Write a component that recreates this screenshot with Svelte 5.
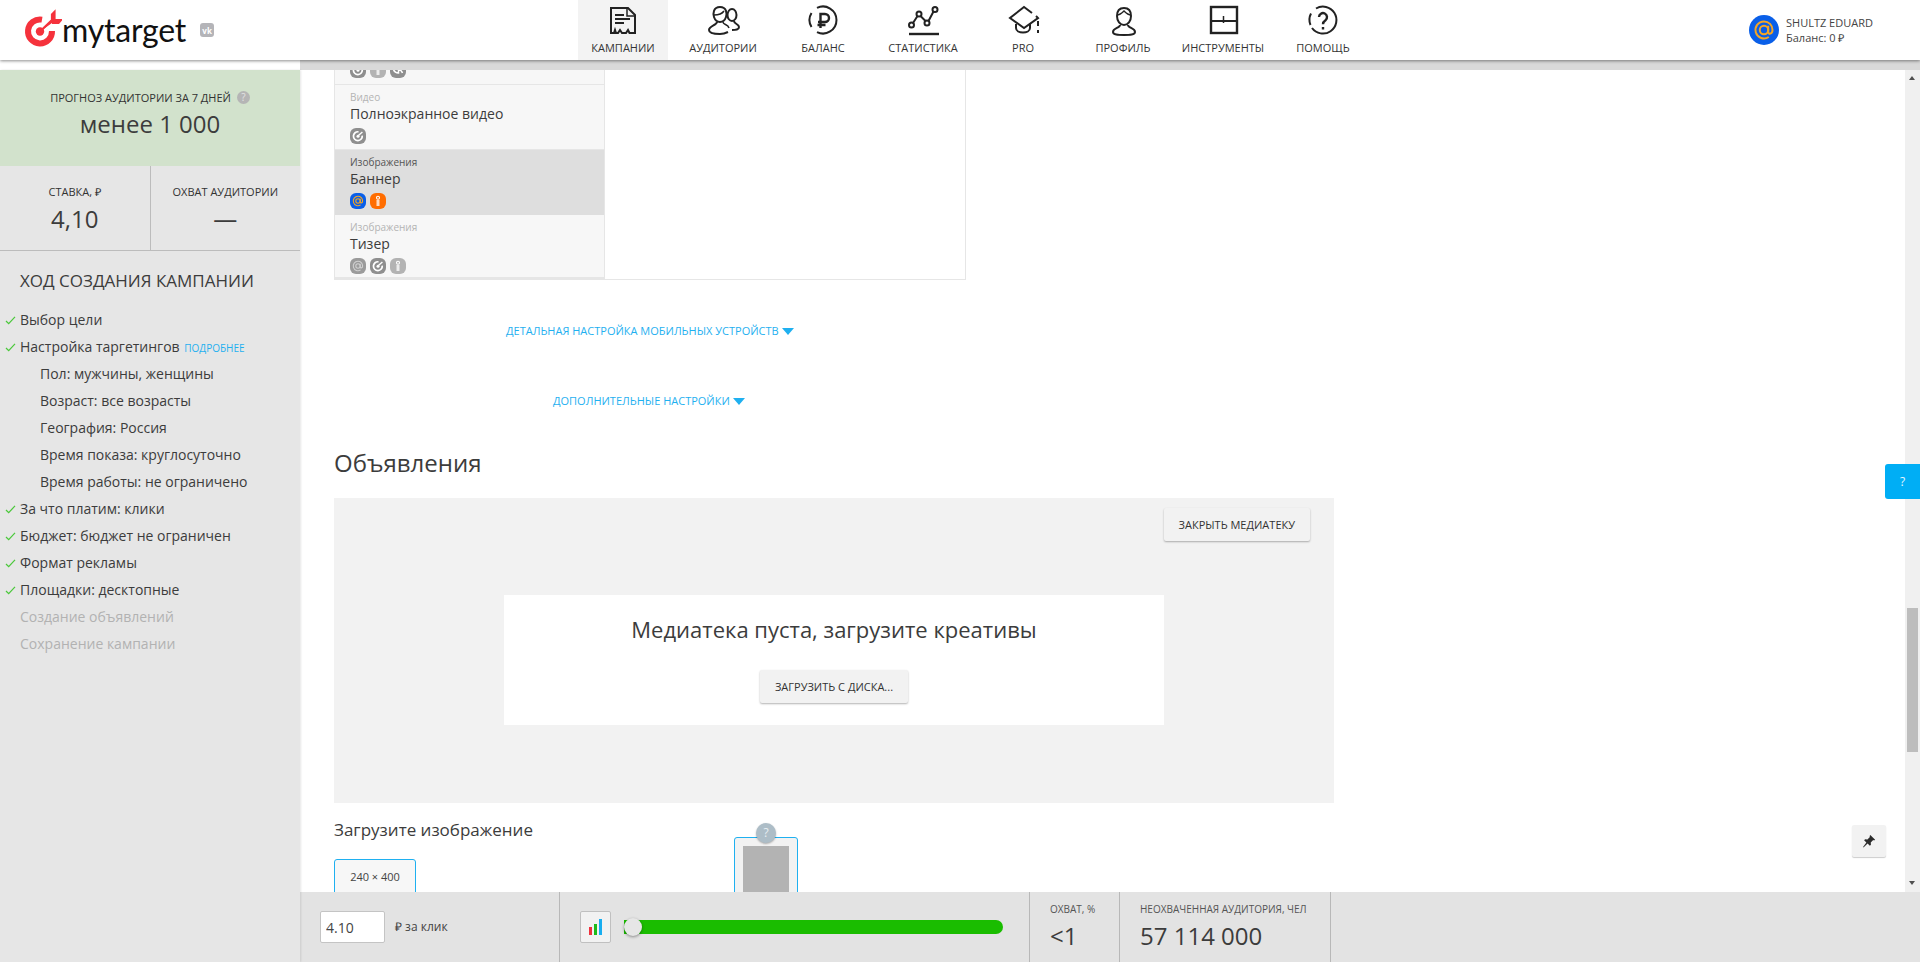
<script lang="ts">
    const nav = [
        { id: "campaigns", label: "КАМПАНИИ", active: true },
        { id: "audience", label: "АУДИТОРИИ" },
        { id: "balance", label: "БАЛАНС" },
        { id: "stats", label: "СТАТИСТИКА" },
        { id: "pro", label: "PRO" },
        { id: "profile", label: "ПРОФИЛЬ" },
        { id: "tools", label: "ИНСТРУМЕНТЫ" },
        { id: "help", label: "ПОМОЩЬ" },
    ];

    const steps = [
        { text: "Выбор цели", kind: "done" },
        { text: "Настройка таргетингов", kind: "done", more: true },
        { text: "Пол: мужчины, женщины", kind: "sub" },
        { text: "Возраст: все возрасты", kind: "sub" },
        { text: "География: Россия", kind: "sub" },
        { text: "Время показа: круглосуточно", kind: "sub" },
        { text: "Время работы: не ограничено", kind: "sub" },
        { text: "За что платим: клики", kind: "done" },
        { text: "Бюджет: бюджет не ограничен", kind: "done" },
        { text: "Формат рекламы", kind: "done" },
        { text: "Площадки: десктопные", kind: "done" },
        { text: "Создание объявлений", kind: "todo" },
        { text: "Сохранение кампании", kind: "todo" },
    ];

    const formats = [
        { type: "Видео", name: "Полноэкранное видео", icons: ["target"] },
        { type: "Изображения", name: "Баннер", icons: ["mail", "ok"], selected: true },
        { type: "Изображения", name: "Тизер", icons: ["mail", "target", "ok"] },
    ];
</script>

{#snippet platform(kind, on)}
    <span class="platform {kind} {on ? 'on' : ''}">
        <svg viewBox="0 0 16 16" width="16" height="16">
            {#if kind === "mail"}
                <circle cx="8" cy="8" r="2.2" fill="none" stroke="currentColor" stroke-width="1.1" />
                <path d="M10.2 5.8v3.1c0 1.6 2.4 1.3 2.4-1 0-2.7-2-4.6-4.6-4.6a4.700 4.700 0 1 0 2.6 8.600" fill="none" stroke="currentColor" stroke-width="1.1" />
            {:else if kind === "target"}
                <path d="M8.500 3.800a4.400 4.400 0 1 0 3.700 3.800" fill="none" stroke="#fff" stroke-width="1.700" />
                <circle cx="8" cy="8.200" r="1.500" fill="#fff" />
                <path d="M8.400 7.600 12.400 4" stroke="#fff" stroke-width="1.400" />
            {:else if kind === "vk"}
                <path d="M3 5.500c.5 3.500 2.500 5.500 5.500 5.500V5.500M8.500 8c2 0 3-1 3.500-2.500M9 8c2 0 3 1.500 3.500 3" fill="none" stroke="#fff" stroke-width="1.500" />
            {:else}
                <circle cx="8" cy="4.800" r="1.500" fill="none" stroke="#fff" stroke-width="1.100" />
                <path d="M6.500 8h3M6.500 10h3M6.500 12h3" stroke="#fff" stroke-width="1.300" />
            {/if}
        </svg>
    </span>
{/snippet}

{#snippet navIcon(id)}
    <svg viewBox="0 0 34 34" width="34" height="34" fill="none" stroke="#222" stroke-width="2">
        {#if id === "campaigns"}
            <path d="M5 4h17l7 7v18h-5.500l-1.500-3-2 3h-4l-2-3-2 3h-2l-1-3-1 3H5z" />
            <path d="M21 4v8h8" stroke-width="1.500" />
            <path d="M9 11h9M9 15h15M9 19h9" />
        {:else if id === "audience"}
            <path d="M8 13c-1-3-1-10 6-10s7 7 6 10c-1 3-3 5-6 5s-5-2-6-5z" />
            <path d="M8 11c3 0 8-1 10-4" stroke-width="1.500" />
            <path d="M11 18c0 3-8 4-8 8 0 3 5 4 11 4 4 0 6-1 8-2" />
            <path d="M17 18c0 3 5 2 6 6" stroke-width="1.500" />
            <ellipse cx="26" cy="11" rx="4.500" ry="6" />
            <path d="M28 17c0 3 5 3 5 6 0 3-3 3-7 3" />
        {:else if id === "balance"}
            <path d="M11 3.900A13.500 13.500 0 1 1 11 28.100M5.500 9a13.500 13.500 0 0 0 0 14" />
            <path d="M14.500 24V10h4.500a4 4 0 0 1 0 8h-7M11.500 21h8" stroke-width="2.400" />
        {:else if id === "stats"}
            <circle cx="5.500" cy="21" r="2.500" />
            <circle cx="13" cy="10" r="2.500" />
            <circle cx="21" cy="19" r="2.500" />
            <circle cx="29" cy="5.500" r="2.500" />
            <path d="M7 19l4.500-7M14.500 12l5 5M22.500 17l5-9.500" />
            <path d="M3 30h30" stroke-width="2.400" />
        {:else if id === "pro"}
            <path d="M26 9 18 3 4 14l14 10 14-10-2-2" />
            <path d="M10 20v4c0 6 14 6 14 0v-4" />
            <path d="M32 17v5M32 26v3" />
        {:else if id === "profile"}
            <path d="M11 12c0-5 2-8 7-8s7 3 7 8-3 9-7 9-7-4-7-9z" />
            <path d="M11 11c3 0 5-2 7-4 2 2 4 4 7 4" stroke-width="1.500" />
            <path d="M14 21c0 3-7 3-7 7 0 3 5 3 11 3s11 0 11-3c0-4-7-4-7-7" />
        {:else if id === "tools"}
            <rect x="5" y="3" width="26" height="26" stroke-width="2.400" />
            <path d="M5 17h26" />
            <path d="M17.500 12v7" stroke-width="1.500" />
        {:else}
            <path d="M10 4.500A13.500 13.500 0 1 1 6 24M5 9.500a13.500 13.500 0 0 0-.500 11.500" />
            <path d="M13 13a4 4 0 1 1 6.500 3.200c-1.500 1-2.500 2-2.500 4" stroke-width="2.400" />
            <path d="M17 23v2.500" stroke-width="2.400" />
        {/if}
    </svg>
{/snippet}

<div class="page">
    <header class="top">
        <div class="logo">
            <svg viewBox="0 0 38 44" width="38" height="44">
                <path d="M18 11.600a12 12 0 1 0 10 11.400" fill="none" stroke="#f5323c" stroke-width="6" />
                <circle cx="16" cy="23.500" r="4.200" fill="#f5323c" />
                <path d="M16 23.500 28 12V6.500l2.500-2.500v8h6.500l-2.500 3H28" fill="#f5323c" stroke="#f5323c" stroke-width="2.200" />
            </svg>
            <span class="logo-name">mytarget</span>
            <span class="logo-vk">vk</span>
        </div>
        <nav class="nav">
            {#each nav as item (item.id)}
                <div class="nav-item {item.active ? 'active' : ''}">
                    {@render navIcon(item.id)}
                    <span>{item.label}</span>
                </div>
            {/each}
        </nav>
        <div class="account">
            <span class="avatar">
                <svg viewBox="0 0 30 30" width="30" height="30">
                    <circle cx="15" cy="15" r="15" fill="#0a5fe8" />
                    <circle cx="15" cy="15" r="4.200" fill="none" stroke="#f6a623" stroke-width="2" />
                    <path d="M19.200 10.800v6c0 3 4.300 2.400 4.300-1.800 0-5-3.700-8.500-8.500-8.500a8.500 8.500 0 1 0 4.800 15.500" fill="none" stroke="#f6a623" stroke-width="2" />
                </svg>
            </span>
            <div class="account-text">
                <div>SHULTZ EDUARD</div>
                <div>Баланс: 0 ₽</div>
            </div>
        </div>
    </header>

    <div class="middle">
        <aside class="side">
            <div class="forecast">
                <div class="caption">ПРОГНОЗ АУДИТОРИИ ЗА 7 ДНЕЙ <span class="hint">?</span></div>
                <div class="forecast-value">менее 1 000</div>
            </div>
            <div class="stats">
                <div class="stat">
                    <div class="caption">СТАВКА, ₽</div>
                    <div class="stat-value">4,10</div>
                </div>
                <div class="stat">
                    <div class="caption">ОХВАТ АУДИТОРИИ</div>
                    <div class="stat-value">—</div>
                </div>
            </div>
            <h2 class="progress-title">ХОД СОЗДАНИЯ КАМПАНИИ</h2>
            <ul class="steps">
                {#each steps as step}
                    <li class={step.kind}>
                        {#if step.kind === "done"}
                            <svg class="check" viewBox="0 0 12 10" width="11" height="9">
                                <path d="M1 5.500 4 8.500 11 1" fill="none" stroke="#4cc83c" stroke-width="1.400" />
                            </svg>
                        {/if}
                        {step.text}
                        {#if step.more}<a class="more">ПОДРОБНЕЕ</a>{/if}
                    </li>
                {/each}
            </ul>
        </aside>

        <div class="work">
            <div class="work-top">
                <main class="main">
                    <div class="format-box">
                        <div class="format-list">
                            <div class="format-row cut">
                                <div class="format-icons">
                                    {@render platform("target")}
                                    {@render platform("ok")}
                                    {@render platform("vk")}
                                </div>
                            </div>
                            {#each formats as f}
                                <div class="format-row {f.selected ? 'selected' : ''}">
                                    <div class="format-type">{f.type}</div>
                                    <div class="format-name">{f.name}</div>
                                    <div class="format-icons">
                                        {#each f.icons as icon}
                                            {@render platform(icon, f.selected)}
                                        {/each}
                                    </div>
                                </div>
                            {/each}
                        </div>
                    </div>

                    <a class="toggle first">ДЕТАЛЬНАЯ НАСТРОЙКА МОБИЛЬНЫХ УСТРОЙСТВ <i class="tri"></i></a>
                    <a class="toggle second">ДОПОЛНИТЕЛЬНЫЕ НАСТРОЙКИ <i class="tri"></i></a>

                    <h1 class="ads-title">Объявления</h1>

                    <section class="library">
                        <div class="library-top">
                            <button class="btn">ЗАКРЫТЬ МЕДИАТЕКУ</button>
                        </div>
                        <div class="library-empty">
                            <div class="empty-title">Медиатека пуста, загрузите креативы</div>
                            <button class="btn">ЗАГРУЗИТЬ С ДИСКА...</button>
                        </div>
                    </section>

                    <div class="upload-title">Загрузите изображение</div>
                    <div class="sizes">
                        <div class="size-tab">240 × 400</div>
                        <div class="preview">
                            <div class="preview-fill"></div>
                            <span class="preview-hint">?</span>
                        </div>
                    </div>

                    <div class="pin">
                        <svg viewBox="0 0 16 16" width="14" height="14">
                            <path d="M9.500 1 15 6.500l-1.200.8-1-.4-2.800 2.800.2 2.600-1.200 1.200-2.600-2.700L2 15l-1 .1 4-5.500-2.600-2.500L3.600 6l2.600.2L9 3.300l-.3-1z" fill="#2b2b2b" />
                        </svg>
                    </div>
                </main>

                <div class="scrollbar">
                    <i class="arrow up"></i>
                    <div class="thumb"></div>
                    <i class="arrow down"></i>
                </div>

                <div class="help-tab">?</div>
            </div>

            <footer class="bottom">
                <div class="cell bid">
                    <input class="bid-input" value="4.10" />
                    <span class="bid-unit">₽ за клик</span>
                </div>
                <div class="cell slider-cell">
                    <button class="chart-btn" aria-label="График">
                        <svg viewBox="0 0 14 16" width="14" height="16">
                            <rect x="0" y="8" width="3" height="8" fill="#f0313c" />
                            <rect x="5" y="5" width="3" height="11" fill="#1fbb1a" />
                            <rect x="10" y="0" width="3" height="16" fill="#18aef0" />
                        </svg>
                    </button>
                    <div class="slider"><span class="slider-thumb"></span></div>
                </div>
                <div class="cell metric reach">
                    <div class="metric-label">ОХВАТ, %</div>
                    <div class="metric-value">&lt;1</div>
                </div>
                <div class="cell metric rest">
                    <div class="metric-label">НЕОХВАЧЕННАЯ АУДИТОРИЯ, ЧЕЛ</div>
                    <div class="metric-value">57 114 000</div>
                </div>
            </footer>
        </div>
    </div>
</div>

<style>
    :global(body) {
        margin: 0;
        overflow: hidden;
    }

    .page {
        display: flex;
        flex-direction: column;
        height: 962px;
        overflow: hidden;
        font-family: "Open Sans", sans-serif;
        color: #333;
        background: #fff;
    }

    .top {
        position: relative;
        z-index: 2;
        display: flex;
        flex: none;
        height: 60px;
        background: #fff;
        box-shadow: 0 1px 3px rgba(0, 0, 0, 0.45);
    }

    .logo {
        display: flex;
        align-items: center;
        width: 578px;
        padding-left: 24px;
        box-sizing: border-box;
    }

    .logo-name {
        margin-left: 0;
        font-family: "Lato", sans-serif;
        font-size: 32px;
        letter-spacing: -0.2px;
        line-height: 1;
        color: #111;
    }

    .logo-vk {
        display: flex;
        align-items: center;
        justify-content: center;
        width: 14px;
        height: 14px;
        margin-left: 14px;
        border-radius: 3px;
        background: #b4b4b8;
        color: #fff;
        font-size: 8px;
        font-weight: 700;
    }

    .nav {
        display: flex;
        gap: 10px;
    }

    .nav-item {
        display: flex;
        flex-direction: column;
        align-items: center;
        width: 90px;
        height: 60px;
        padding-top: 4px;
        box-sizing: border-box;
    }

    .nav-item.active {
        background: #f3f3f3;
    }

    .nav-item span {
        margin-top: 2px;
        font-size: 11px;
        line-height: 16px;
        white-space: nowrap;
    }

    .account {
        display: flex;
        align-items: center;
        gap: 7px;
        margin-left: 381px;
    }

    .avatar {
        display: flex;
    }

    .account-text {
        font-size: 11px;
        line-height: 15px;
        color: #444;
    }

    .middle {
        display: flex;
        flex: 1;
        min-height: 0;
    }

    .side {
        position: relative;
        z-index: 1;
        flex: none;
        width: 300px;
        margin-top: 10px;
        background: #e6e6e6;
        box-shadow: 1px 0 2px rgba(0, 0, 0, 0.1);
    }

    .forecast {
        height: 96px;
        padding-top: 18px;
        box-sizing: border-box;
        background: #d2e2cc;
        text-align: center;
    }

    .caption {
        font-size: 11px;
        line-height: 20px;
        color: #333;
    }

    .hint {
        display: inline-block;
        width: 13px;
        height: 13px;
        margin-left: 3px;
        border-radius: 50%;
        background: #b5b5b5;
        color: #e3e3e3;
        font-size: 10px;
        line-height: 13px;
        vertical-align: 1px;
    }

    .forecast-value {
        margin-top: -1px;
        font-size: 24px;
        line-height: 34px;
        color: #3c3c3c;
    }

    .stats {
        display: flex;
        height: 85px;
        border-bottom: 1px solid #bcbcbc;
        box-sizing: border-box;
    }

    .stat {
        flex: 1;
        padding-top: 16px;
        text-align: center;
    }

    .stat + .stat {
        border-left: 1px solid #bcbcbc;
    }

    .stat-value {
        font-size: 24px;
        line-height: 34px;
        color: #3c3c3c;
    }

    .progress-title {
        margin: 18px 0 0 20px;
        font-size: 17px;
        font-weight: 400;
        line-height: 24px;
        color: #3c3c3c;
    }

    .steps {
        margin: 13px 0 0;
        padding: 0;
        list-style: none;
    }

    .steps li {
        position: relative;
        padding-left: 20px;
        font-size: 14px;
        line-height: 27px;
        color: #3c3c3c;
    }

    .steps li.sub {
        padding-left: 40px;
    }

    .steps li.todo {
        color: #b2b2b2;
    }

    .check {
        position: absolute;
        left: 5px;
        top: 10px;
    }

    .more {
        margin-left: 1px;
        font-size: 10px;
        line-height: 1;
        color: #1fb0f0;
    }

    .work {
        display: flex;
        flex: 1;
        flex-direction: column;
        min-width: 0;
    }

    .work-top {
        position: relative;
        display: flex;
        flex: 1;
        min-height: 0;
        padding-top: 10px;
        background: #d9d9d9;
    }

    .main {
        position: relative;
        flex: 1;
        min-width: 0;
        padding-left: 34px;
        overflow: hidden;
        background: #fff;
    }

    .format-box {
        width: 632px;
        height: 210px;
        border: 1px solid #e6e6e6;
        border-top: 0;
        box-sizing: border-box;
    }

    .format-list {
        width: 270px;
        height: 209px;
        border-right: 1px solid #e6e6e6;
        border-bottom: 2px solid #e6e6e6;
        box-sizing: border-box;
        background: #f7f7f7;
    }

    .format-row {
        height: 65px;
        padding: 5px 0 0 15px;
        box-sizing: border-box;
        border-bottom: 1px solid #e6e6e6;
    }

    .format-row.cut {
        height: 15px;
        padding-top: 0;
        overflow: hidden;
    }

    .format-row.cut .format-icons {
        margin-top: -8px;
    }

    .format-row.selected {
        background: #dedede;
        border-bottom-color: #dedede;
    }

    .format-row:last-child {
        border-bottom: 0;
    }

    .format-type {
        font-size: 10px;
        line-height: 14px;
        color: #b4b4b4;
    }

    .selected .format-type {
        color: #555;
    }

    .format-name {
        font-size: 14px;
        line-height: 20px;
        color: #3c3c3c;
    }

    .format-icons {
        display: flex;
        gap: 4px;
        margin-top: 4px;
    }

    .platform {
        display: flex;
        width: 16px;
        height: 16px;
        border-radius: 6px;
        color: #d0d0d0;
    }

    .platform.mail {
        background: #9b9b9b;
    }

    .platform.target,
    .platform.vk {
        background: #8f8f8f;
    }

    .platform.ok {
        background: #b3b3b3;
    }

    .platform.mail.on {
        background: #0a5fe8;
        color: #f6a623;
    }

    .platform.ok.on {
        background: #ff6d00;
    }

    .toggle {
        display: block;
        width: max-content;
        font-size: 11px;
        line-height: 16px;
        color: #1fb0f0;
    }

    .toggle.first {
        margin: 43px 0 0 172px;
    }

    .toggle.second {
        margin: 54px 0 0 219px;
    }

    .tri {
        display: inline-block;
        width: 0;
        height: 0;
        border-left: 6px solid transparent;
        border-right: 6px solid transparent;
        border-top: 7px solid #1fb0f0;
        vertical-align: 0;
    }

    .ads-title {
        margin: 37px 0 0;
        font-size: 24px;
        font-weight: 400;
        line-height: 34px;
        color: #3c3c3c;
    }

    .library {
        width: 1000px;
        height: 305px;
        margin-top: 18px;
        padding-top: 10px;
        box-sizing: border-box;
        background: #f2f2f2;
    }

    .library-top {
        display: flex;
        justify-content: flex-end;
        padding-right: 24px;
    }

    .btn {
        height: 33px;
        padding: 0 15px;
        border: 0;
        border-radius: 2px;
        background: #f2f2f2;
        box-shadow: 0 1px 2px rgba(0, 0, 0, 0.3);
        font-family: inherit;
        font-size: 11px;
        color: #333;
    }

    .library-empty {
        display: flex;
        flex-direction: column;
        align-items: center;
        width: 660px;
        height: 130px;
        margin: 54px 0 0 170px;
        padding-top: 17px;
        box-sizing: border-box;
        background: #fff;
    }

    .empty-title {
        margin-bottom: 24px;
        font-size: 22px;
        line-height: 34px;
        color: #3c3c3c;
    }

    .upload-title {
        margin-top: 15px;
        font-size: 17px;
        line-height: 24px;
        color: #3c3c3c;
    }

    .sizes {
        position: relative;
        padding-top: 17px;
    }

    .size-tab {
        width: 82px;
        height: 50px;
        padding-top: 9px;
        box-sizing: border-box;
        border: 1px solid #1fb0f0;
        border-radius: 3px;
        background: #f7f7f7;
        font-size: 11px;
        line-height: 16px;
        text-align: center;
        color: #444;
    }

    .preview {
        position: absolute;
        left: 400px;
        top: -5px;
        width: 64px;
        height: 120px;
        box-sizing: border-box;
        border: 1px solid #1fb0f0;
        border-radius: 3px;
        background: #f2f2f2;
    }

    .preview-fill {
        width: 46px;
        height: 90px;
        margin: 8px 0 0 8px;
        background: #b3b3b3;
    }

    .preview-hint {
        position: absolute;
        left: 21px;
        top: -15px;
        width: 20px;
        height: 20px;
        border-radius: 50%;
        background: #adbdc7;
        box-shadow: 0 1px 2px rgba(0, 0, 0, 0.3);
        color: #e8eef2;
        font-size: 12px;
        line-height: 20px;
        text-align: center;
    }

    .help-tab {
        position: absolute;
        right: 0;
        top: 404px;
        width: 35px;
        height: 35px;
        border-radius: 3px 0 0 3px;
        background: #00aef5;
        color: #e6f7ff;
        font-size: 12px;
        line-height: 35px;
        text-align: center;
    }

    .pin {
        position: absolute;
        left: 1552px;
        top: 755px;
        display: flex;
        align-items: center;
        justify-content: center;
        width: 34px;
        height: 32px;
        border-radius: 2px;
        background: #f2f2f2;
        box-shadow: 0 1px 1px rgba(0, 0, 0, 0.2);
    }

    .scrollbar {
        position: relative;
        flex: none;
        width: 15px;
        background: #f0f0f0;
    }

    .thumb {
        position: absolute;
        left: 2px;
        top: 538px;
        width: 11px;
        height: 144px;
        background: #bdbdbd;
    }

    .arrow {
        position: absolute;
        left: 4px;
        width: 0;
        height: 0;
        border-left: 3.500px solid transparent;
        border-right: 3.500px solid transparent;
    }

    .arrow.up {
        top: 6px;
        border-bottom: 4px solid #505050;
    }

    .arrow.down {
        top: 811px;
        border-top: 4px solid #505050;
    }

    .bottom {
        display: flex;
        flex: none;
        height: 70px;
        background: #e3e3e3;
    }

    .cell {
        height: 70px;
        box-sizing: border-box;
        border-right: 1px solid #b8b8b8;
    }

    .bid {
        display: flex;
        align-items: flex-start;
        width: 260px;
        padding: 19px 0 0 20px;
    }

    .bid-input {
        width: 65px;
        height: 32px;
        padding: 0 5px;
        box-sizing: border-box;
        border: 1px solid #c4c4c4;
        border-radius: 2px;
        font-family: inherit;
        font-size: 14px;
        color: #444;
    }

    .bid-unit {
        margin-left: 10px;
        font-size: 12px;
        line-height: 32px;
        color: #444;
    }

    .slider-cell {
        display: flex;
        align-items: flex-start;
        width: 470px;
        padding: 19px 0 0 20px;
    }

    .chart-btn {
        display: flex;
        align-items: center;
        justify-content: center;
        width: 31px;
        height: 32px;
        padding: 0;
        border: 1px solid #c0c0c0;
        border-radius: 2px;
        background: #f2f2f2;
    }

    .slider {
        position: relative;
        width: 379px;
        height: 14px;
        margin: 9px 0 0 13px;
        border-radius: 0 7px 7px 0;
        background: #1abd00;
    }

    .slider-thumb {
        position: absolute;
        left: 0;
        top: -2px;
        width: 18px;
        height: 18px;
        border-radius: 50%;
        background: #e6e6e6;
        box-shadow: 0 1px 3px rgba(0, 0, 0, 0.4);
    }

    .metric {
        padding: 10px 0 0 20px;
    }

    .reach {
        width: 90px;
    }

    .rest {
        width: 211px;
    }

    .metric-label {
        font-size: 10px;
        line-height: 14px;
        color: #555;
        white-space: nowrap;
    }

    .metric-value {
        margin-top: 3px;
        font-size: 24px;
        line-height: 34px;
        color: #3c3c3c;
    }
</style>
